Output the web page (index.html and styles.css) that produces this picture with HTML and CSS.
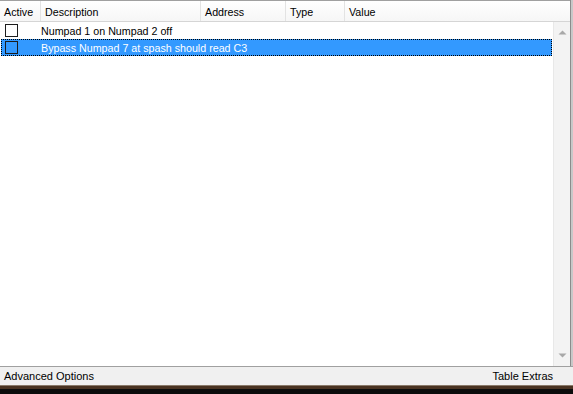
FILE: index.html
```html
<!DOCTYPE html>
<html>
<head>
<meta charset="utf-8">
<link rel="stylesheet" href="styles.css">
</head>
<body>
<div class="frame">
  <div class="main">
    <div class="list">
      <div class="header">
        <div class="hcol c-active">Active</div>
        <div class="hcol c-desc">Description</div>
        <div class="hcol c-addr">Address</div>
        <div class="hcol c-type">Type</div>
        <div class="hcol c-value">Value</div>
      </div>
      <div class="body">
        <div class="rows">
          <div class="row">
            <div class="cell-check"><span class="check"></span></div>
            <div class="cell-desc">Numpad 1 on Numpad 2 off</div>
          </div>
          <div class="row selected">
            <div class="cell-check"><span class="check"></span></div>
            <div class="cell-desc">Bypass Numpad 7 at spash should read C3</div>
          </div>
        </div>
        <div class="scrollbar">
          <svg class="arrow" width="9" height="5" viewBox="0 0 9 5"><path d="M0.5 4.5 L4.5 0.5 L8.5 4.5 Z" fill="#a8a8a8"/></svg>
          <svg class="arrow" width="9" height="5" viewBox="0 0 9 5"><path d="M0.5 0.5 L4.5 4.5 L8.5 0.5 Z" fill="#a8a8a8"/></svg>
        </div>
      </div>
    </div>
    <div class="edge"></div>
  </div>
  <div class="footer">
    <span>Advanced Options</span>
    <span>Table Extras</span>
  </div>
  <div class="bottom"></div>
</div>
</body>
</html>
```
FILE: styles.css
```css
html, body {
  margin: 0;
  padding: 0;
  background: #ffffff;
}
.frame {
  width: 573px;
  height: 394px;
  display: flex;
  flex-direction: column;
  font-family: "Liberation Sans", Arial, sans-serif;
  font-size: 10.7px;
  color: #000;
  overflow: hidden;
}
.main {
  height: 366px;
  display: flex;
}
.list {
  flex: 1;
  display: flex;
  flex-direction: column;
  border-top: 1px solid #a0a0a0;
}
.edge {
  width: 3px;
  background: #c8c8c8;
  border-left: 1px solid #8c8c8c;
  box-sizing: border-box;
}
.header {
  height: 20px;
  display: grid;
  grid-template-columns: 41px 160px 85px 59px 1fr;
  background: linear-gradient(#ffffff, #f6f6f6);
  border-bottom: 1px solid #d5d5d5;
}
.hcol {
  padding-left: 4px;
  line-height: 22px;
  border-right: 1px solid #e3e3e3;
  white-space: nowrap;
  overflow: hidden;
}
.c-value { border-right: none; }
.body {
  flex: 1;
  display: flex;
}
.rows {
  flex: 1;
}
.row {
  height: 17px;
  display: flex;
  align-items: center;
  margin-left: 1px;
  margin-right: 1px;
  box-sizing: border-box;
  border: 1px dotted transparent;
}
.row.selected {
  background: #3399ff;
  color: #ffffff;
  border: 1px dotted #000;
}
.cell-check {
  display: flex;
  align-items: center;
  padding-left: 3px;
  box-sizing: border-box;
  width: 39px;
}
.check {
  width: 13px;
  height: 13px;
  box-sizing: border-box;
  border: 1px solid #1c1c1c;
  background: #fff;
}
.selected .check {
  background: #3399ff;
}
.cell-desc {
  white-space: nowrap;
}
.scrollbar {
  width: 17px;
  background: #f3f3f3;
  border-left: 1px solid #e8e8e8;
  display: flex;
  flex-direction: column;
  justify-content: space-between;
  align-items: center;
  padding: 8px 0 8px;
  box-sizing: border-box;
}
.arrow { display: block; }
.footer {
  height: 19px;
  display: flex;
  justify-content: space-between;
  align-items: center;
  padding: 0 20px 0 4px;
  background: #f0f0f0;
  border-top: 1px solid #a0a0a0;
  box-sizing: border-box;
  font-size: 11px;
}
.bottom {
  flex: 1;
  background: linear-gradient(#8a7a6a 0, #8a7a6a 1px, #4a3322 1px, #4a3322 4px, #0c0c0c 4px);
}
```
